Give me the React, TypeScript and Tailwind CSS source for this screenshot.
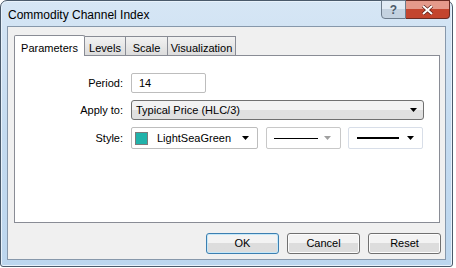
import React from "react";

const font = { fontFamily: '"Liberation Sans", Arial, sans-serif' };

const Arrow = ({ gray }: { gray?: boolean }) => (
  <svg width="7" height="4" viewBox="0 0 7 4" className="shrink-0">
    <path d="M0 0h7L3.5 4z" fill={gray ? "#a0a0a0" : "#000"} />
  </svg>
);

const Tab = ({ label, active, w }: { label: string; active?: boolean; w: string }) =>
  active ? (
    <div className={w + " h-[21px] pt-[4px] text-center bg-white border border-b-0 border-[#898c95] rounded-t-[2px] relative z-10 -mb-px text-[11px] text-black"}>
      {label}
    </div>
  ) : (
    <div className={w + " h-[19px] mt-[2px] pt-[3px] text-center bg-gradient-to-b from-[#f2f2f2] to-[#dcdcdc] border border-b-0 border-l-0 border-[#898c95] text-[11px] text-black"}>
      {label}
    </div>
  );

const Button = ({ label, focus }: { label: string; focus?: boolean }) => (
  <div
    className={
      "w-[73px] h-[21px] rounded-[3px] border flex items-center justify-center text-[11px] text-black bg-gradient-to-b from-[#f3f3f3] from-50% to-[#dddddd] to-50% " +
      (focus ? "border-[#3c7fb1] shadow-[inset_0_0_0_1px_#c6e8f8]" : "border-[#707070] shadow-[inset_0_0_0_1px_#fcfcfc]")
    }
  >
    {label}
  </div>
);

export default function App() {
  return (
    <div className="w-[456px] h-[268px] bg-white" style={font}>
      <div className="w-[453px] h-[267px] rounded-t-[7px] rounded-b-[3px] border border-[#4a5a6b] bg-gradient-to-b from-[#d6e6f5] via-[#c4dbf0] to-[#bcd6ee] flex flex-col shadow-[inset_0_0_0_1px_#e8f2fb]">
        <div className="h-[25px] flex items-start">
          <div className="pl-[7px] pt-[5px] text-[12px] text-black flex-1">Commodity Channel Index</div>
          <div className="flex mr-[2px] -mt-px">
            <div className="w-[25px] h-[19px] rounded-bl-[4px] border border-[#6d7c8c] bg-gradient-to-b from-[#e1ebf5] from-50% to-[#c4d2e0] to-50% flex items-center justify-center text-[12px] font-bold text-[#4b5a6a]">
              ?
            </div>
            <div className="w-[44px] h-[19px] rounded-br-[4px] border border-l-0 border-[#6a2b22] bg-gradient-to-b from-[#e59a8b] from-50% to-[#c3452e] to-50% flex items-center justify-center">
              <svg width="13" height="10" viewBox="0 0 13 10">
                <path d="M2 1l9 8M11 1l-9 8" stroke="#5a1e16" strokeWidth="3.4" />
                <path d="M2 1l9 8M11 1l-9 8" stroke="#ffffff" strokeWidth="2" />
              </svg>
            </div>
          </div>
        </div>
        <div className="mx-[6px] mb-[6px] flex-1 bg-[#f0f0f0] border border-[#8798ab] flex flex-col pl-[6px] pr-[5px] pt-[7px]">
          <div className="flex items-end">
            <Tab label="Parameters" active w="w-[71px]" />
            <Tab label="Levels" w="w-[41px]" />
            <Tab label="Scale" w="w-[42px]" />
            <Tab label="Visualization" w="w-[68px]" />
          </div>
          <div className="h-[168px] bg-white border border-[#898c95] flex flex-col pt-[17px] text-[11px] text-black">
            <div className="flex items-center h-[20px]">
              <div className="w-[116px] text-right pr-[8px]">Period:</div>
              <div className="w-[75px] h-[20px] border border-[#bdbdbd] rounded-[2px] pl-[7px] flex items-center">14</div>
            </div>
            <div className="flex items-center h-[20px] mt-[7px]">
              <div className="w-[116px] text-right pr-[8px]">Apply to:</div>
              <div className="w-[293px] h-[20px] rounded-[3px] border border-[#707070] bg-gradient-to-b from-[#f2f2f2] from-50% to-[#e0e0e0] to-50% flex items-center pl-[4px] pr-[6px] justify-between">
                <span>Typical Price (HLC/3)</span>
                <Arrow />
              </div>
            </div>
            <div className="flex items-center h-[22px] mt-[7px]">
              <div className="w-[116px] text-right pr-[8px]">Style:</div>
              <div className="w-[127px] h-[22px] border border-[#bdbdbd] rounded-[2px] flex items-center pl-[3px] pr-[8px]">
                <div className="w-[13px] h-[13px] bg-[#20b2aa] border border-[#7a7a7a]" />
                <span className="ml-[9px] flex-1">LightSeaGreen</span>
                <Arrow />
              </div>
              <div className="w-[75px] h-[22px] ml-[8px] border border-[#c8c8c8] rounded-[2px] flex items-center pl-[7px] pr-[9px] justify-between">
                <div className="w-[44px] h-px bg-black" />
                <Arrow gray />
              </div>
              <div className="w-[75px] h-[22px] ml-[7px] border border-[#d8dee8] rounded-[2px] flex items-center pl-[8px] pr-[8px] justify-between">
                <div className="w-[42px] h-[2px] bg-black" />
                <Arrow />
              </div>
            </div>
          </div>
          <div className="flex justify-end gap-[8px] mt-[10px] -mr-[1px]">
            <Button label="OK" focus />
            <Button label="Cancel" />
            <Button label="Reset" />
          </div>
        </div>
      </div>
    </div>
  );
}
